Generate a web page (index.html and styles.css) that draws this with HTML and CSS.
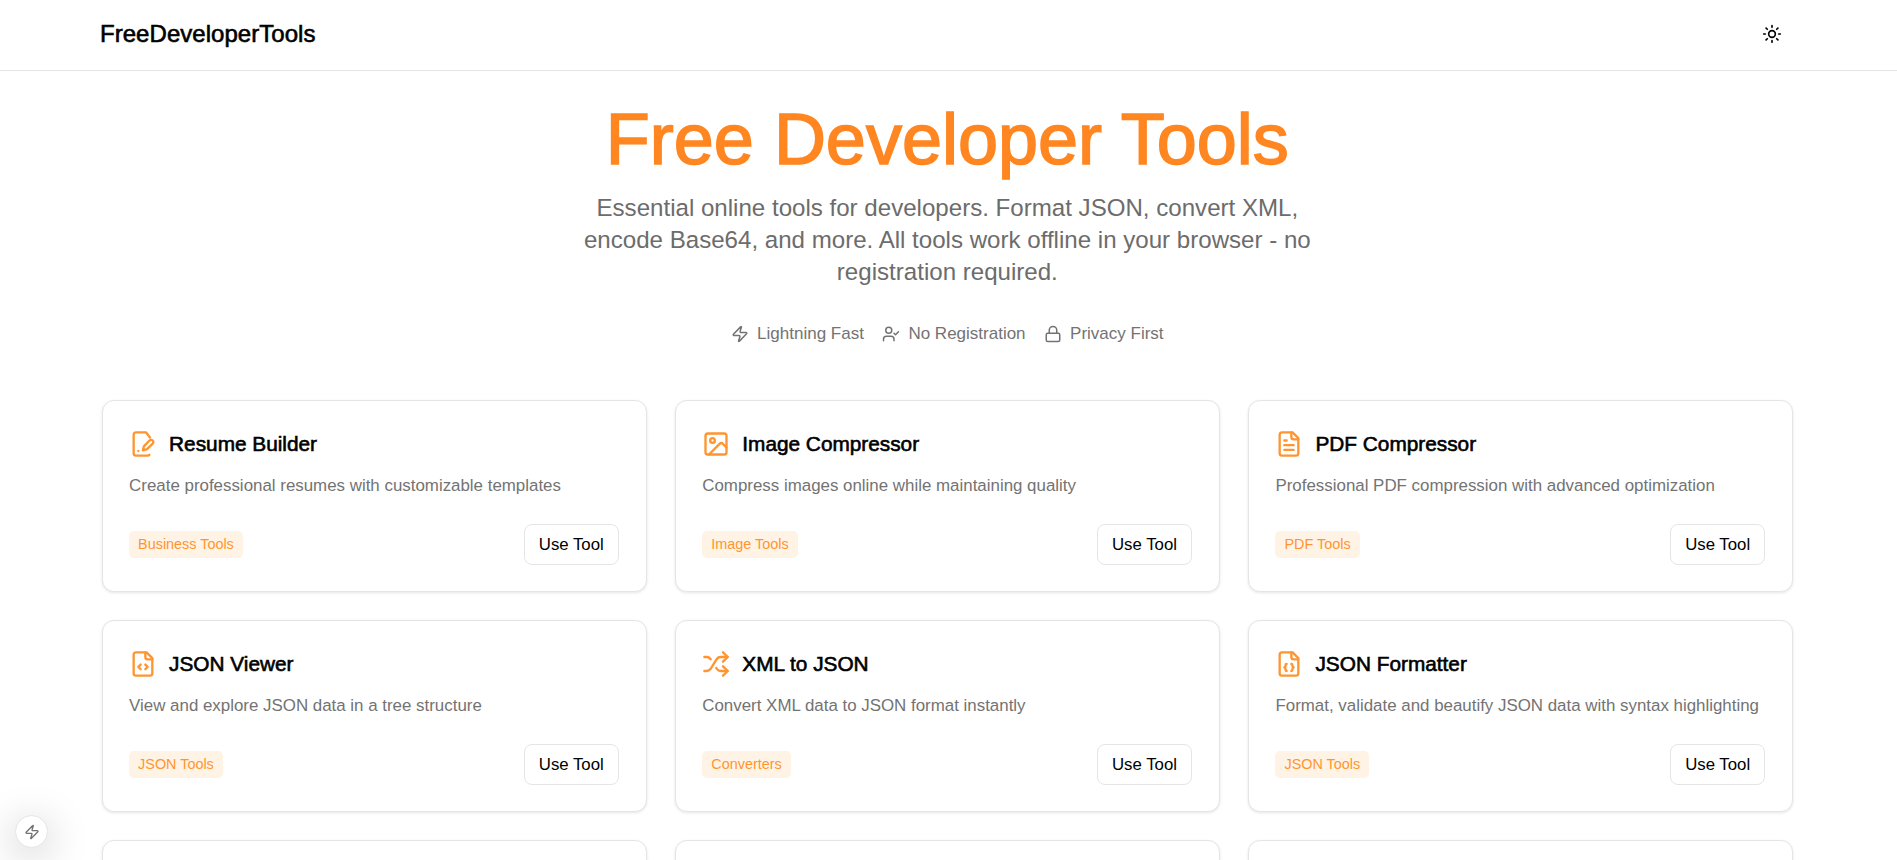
FILE: index.html
```html
<!DOCTYPE html>
<html lang="en">
<head>
<meta charset="utf-8">
<title>Free Developer Tools</title>
<link rel="stylesheet" href="styles.css">
</head>
<body>
<header class="topbar">
  <a class="logo">FreeDeveloperTools</a>
  <button class="theme" aria-label="Toggle theme">
    <svg class="i20" viewBox="0 0 24 24"><circle cx="12" cy="12" r="4"/><path d="M12 2v2M12 20v2M4.93 4.93l1.41 1.41M17.66 17.66l1.41 1.41M2 12h2M20 12h2M6.34 17.66l-1.41 1.41M19.07 4.93l-1.41 1.41"/></svg>
  </button>
</header>
<main class="page">
  <section class="hero">
    <h1>Free Developer Tools</h1>
    <p class="lead">Essential online tools for developers. Format JSON, convert XML, encode Base64, and more. All tools work offline in your browser - no registration required.</p>
    <ul class="perks">
      <li><svg viewBox="0 0 24 24"><path d="M4 14a1 1 0 0 1-.78-1.63l9.9-10.2a.5.5 0 0 1 .86.46l-1.92 6.02A1 1 0 0 0 13 10h7a1 1 0 0 1 .78 1.63l-9.9 10.2a.5.5 0 0 1-.86-.46l1.92-6.02A1 1 0 0 0 11 14z"/></svg>Lightning Fast</li>
      <li><svg viewBox="0 0 24 24"><path d="M16 21v-2a4 4 0 0 0-4-4H6a4 4 0 0 0-4 4v2"/><circle cx="9" cy="7" r="4"/><path d="m16 11 2 2 4-4"/></svg>No Registration</li>
      <li><svg viewBox="0 0 24 24"><rect x="3" y="11" width="18" height="11" rx="2"/><path d="M7 11V7a5 5 0 0 1 10 0v4"/></svg>Privacy First</li>
    </ul>
  </section>
  <section class="grid">
    <article class="card">
      <h2><svg viewBox="0 0 24 24"><path d="M18 6.5 14.5 2H6a2 2 0 0 0-2 2v16a2 2 0 0 0 2 2h10a2 2 0 0 0 1.5-.7"/><path d="M8 18h.01"/><path d="M20.3 9a1.9 1.9 0 0 0-2.7 0l-4.5 4.6a2 2 0 0 0-.5.9l-.7 2.9 2.9-.7a2 2 0 0 0 .9-.5l4.6-4.5a1.9 1.9 0 0 0 0-2.7z"/></svg>Resume Builder</h2>
      <p>Create professional resumes with customizable templates</p>
      <div class="foot"><span class="tag">Business Tools</span><button class="use">Use Tool</button></div>
    </article>
    <article class="card">
      <h2><svg viewBox="0 0 24 24"><rect x="3" y="3" width="18" height="18" rx="2"/><circle cx="9" cy="9" r="2"/><path d="m21 15-3.09-3.09a2 2 0 0 0-2.82 0L6 21"/></svg>Image Compressor</h2>
      <p>Compress images online while maintaining quality</p>
      <div class="foot"><span class="tag">Image Tools</span><button class="use">Use Tool</button></div>
    </article>
    <article class="card">
      <h2><svg viewBox="0 0 24 24"><path d="M15 2H6a2 2 0 0 0-2 2v16a2 2 0 0 0 2 2h12a2 2 0 0 0 2-2V7z"/><path d="M14 2v4a2 2 0 0 0 2 2h4"/><path d="M10 9H8M16 13H8M16 17H8"/></svg>PDF Compressor</h2>
      <p>Professional PDF compression with advanced optimization</p>
      <div class="foot"><span class="tag">PDF Tools</span><button class="use">Use Tool</button></div>
    </article>
    <article class="card">
      <h2><svg viewBox="0 0 24 24"><path d="M15 2H6a2 2 0 0 0-2 2v16a2 2 0 0 0 2 2h12a2 2 0 0 0 2-2V7z"/><path d="M14 2v4a2 2 0 0 0 2 2h4"/><path d="m10 12.5-2 2 2 2M14 12.5l2 2-2 2"/></svg>JSON Viewer</h2>
      <p>View and explore JSON data in a tree structure</p>
      <div class="foot"><span class="tag">JSON Tools</span><button class="use">Use Tool</button></div>
    </article>
    <article class="card">
      <h2><svg viewBox="0 0 24 24"><path d="m18 14 4 4-4 4M18 2l4 4-4 4"/><path d="M2 18h1.97a4 4 0 0 0 3.3-1.7l5.46-8.6a4 4 0 0 1 3.3-1.7H22"/><path d="M2 6h1.97a4 4 0 0 1 3.49 2M22 18h-5.95a4 4 0 0 1-3.3-1.8l-.5-.8"/></svg>XML to JSON</h2>
      <p>Convert XML data to JSON format instantly</p>
      <div class="foot"><span class="tag">Converters</span><button class="use">Use Tool</button></div>
    </article>
    <article class="card">
      <h2><svg viewBox="0 0 24 24"><path d="M15 2H6a2 2 0 0 0-2 2v16a2 2 0 0 0 2 2h12a2 2 0 0 0 2-2V7z"/><path d="M14 2v4a2 2 0 0 0 2 2h4"/><path d="M10 12a1 1 0 0 0-1 1v1a1 1 0 0 1-1 1 1 1 0 0 1 1 1v1a1 1 0 0 0 1 1M14 18a1 1 0 0 0 1-1v-1a1 1 0 0 1 1-1 1 1 0 0 1-1-1v-1a1 1 0 0 0-1-1"/></svg>JSON Formatter</h2>
      <p>Format, validate and beautify JSON data with syntax highlighting</p>
      <div class="foot"><span class="tag">JSON Tools</span><button class="use">Use Tool</button></div>
    </article>
    <article class="card"></article>
    <article class="card"></article>
    <article class="card"></article>
  </section>
</main>
<button class="devbadge" aria-label="Dev tools">
  <svg viewBox="0 0 24 24"><path d="M4 14a1 1 0 0 1-.78-1.63l9.9-10.2a.5.5 0 0 1 .86.46l-1.92 6.02A1 1 0 0 0 13 10h7a1 1 0 0 1 .78 1.63l-9.9 10.2a.5.5 0 0 1-.86-.46l1.92-6.02A1 1 0 0 0 11 14z"/></svg>
</button>
</body>
</html>
```
FILE: styles.css
```css
* { box-sizing: border-box; }
html, body { margin: 0; height: 860px; overflow: hidden; background: #fff; }
body { font-family: "Liberation Sans", Arial, sans-serif; color: #000; }

svg { fill: none; stroke: currentColor; stroke-width: 2; stroke-linecap: round; stroke-linejoin: round; flex: none; }
.i20 { width: 20px; height: 20px; }

.topbar { height: 71px; display: flex; align-items: center; justify-content: space-between; padding: 0 105px 2px 100px; border-bottom: 1px solid #e5e5e5; }
.logo { font-size: 24px; line-height: 32px; -webkit-text-stroke: .6px #000; letter-spacing: .04px; }
.theme { width: 40px; height: 40px; display: flex; align-items: center; justify-content: center; padding: 0; border: 0; background: none; color: #000; }

.page { padding: 32px 0 0 101.6px; }
.hero { display: flex; flex-direction: column; align-items: center; text-align: center; width: 1691.5px; }
h1 { margin: 0; font-size: 72px; line-height: 72px; font-weight: 400; color: #ff8620; -webkit-text-stroke: 1.6px #ff8620; }
.lead { width: 768px; margin: 17px 0 0; font-size: 24.1px; line-height: 32px; color: #6c6c6c; }
.perks { list-style: none; display: flex; gap: 18.5px; margin: 34px 0 0; padding: 0; font-size: 17px; line-height: 24px; color: #737373; }
.perks li { display: flex; align-items: center; gap: 8px; }
.perks svg { width: 18px; height: 18px; }

.grid { display: grid; grid-template-columns: repeat(3, 545.2px); gap: 28px; margin-top: 54px; }
.card { height: 192px; padding: 29px 27px 26px 26.5px; border: 1px solid #e5e5e5; border-radius: 12px; background: #fff; box-shadow: 0 1px 3px rgba(0,0,0,.1); display: flex; flex-direction: column; }
.card h2 { display: flex; align-items: center; gap: 12px; margin: 0; font-size: 20.8px; line-height: 28px; font-weight: 400; -webkit-text-stroke: .6px #000; color: #000; }
.card h2 svg { color: #ff9530; width: 28px; height: 28px; }
.card p { margin: 15px 0 0; font-size: 16.9px; line-height: 25px; color: #737373; }
.foot { margin-top: auto; display: flex; align-items: center; justify-content: space-between; }
.tag { padding: 4px 9px; font-size: 14.4px; line-height: 19px; color: #ff9530; background: #fff3e6; border-radius: 5px; }
.use { height: 41px; padding: 0 14px; font: 16.8px "Liberation Sans", Arial, sans-serif; color: #000; background: #fff; border: 1px solid #e5e5e5; border-radius: 8px; }

.devbadge { position: absolute; left: 15px; top: 815px; width: 33px; height: 33px; padding: 0; display: flex; align-items: center; justify-content: center; border: 1px solid #e5e5e5; border-radius: 50%; background: #fff; color: #737373; box-shadow: 0 8px 40px rgba(0,0,0,.25); }
.devbadge svg { width: 16px; height: 16px; }
```
